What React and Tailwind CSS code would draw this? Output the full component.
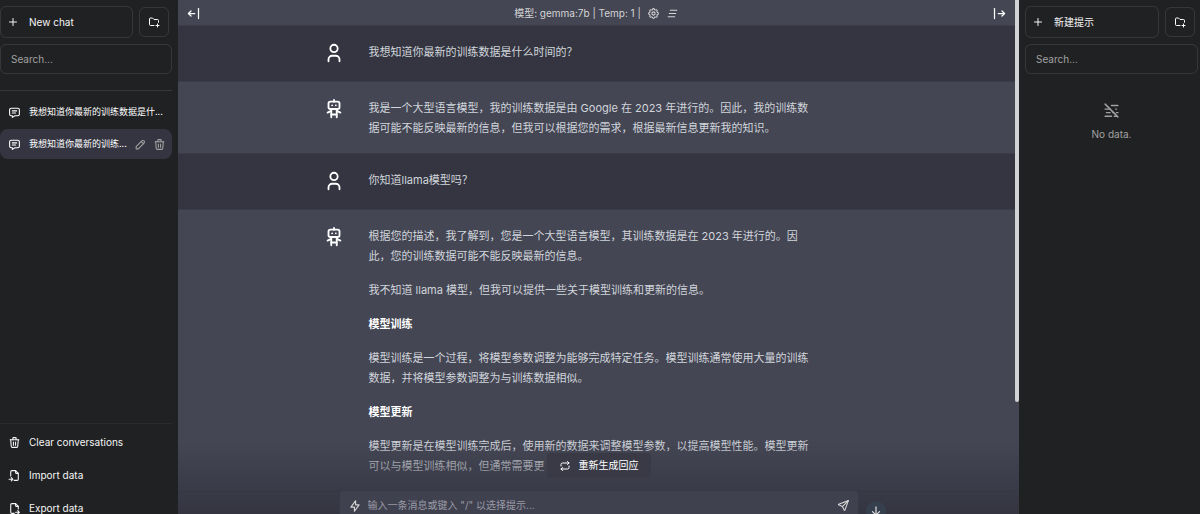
import React from 'react';
import {
  TbArrowBarLeft,
  TbArrowBarRight,
  TbArrowDown,
  TbBolt,
  TbClearAll,
  TbFileExport,
  TbFileImport,
  TbFolderPlus,
  TbMessage,
  TbMistOff,
  TbPencil,
  TbPlus,
  TbRepeat,
  TbRobot,
  TbSend,
  TbSettings,
  TbTrash,
  TbUser,
} from 'react-icons/tb';

const messages = [
  { role: 'user', blocks: [{ text: '我想知道你最新的训练数据是什么时间的？' }] },
  {
    role: 'assistant',
    blocks: [
      {
        text: '我是一个大型语言模型，我的训练数据是由 Google 在 2023 年进行的。因此，我的训练数\n据可能不能反映最新的信息，但我可以根据您的需求，根据最新信息更新我的知识。',
      },
    ],
  },
  { role: 'user', blocks: [{ text: '你知道llama模型吗？' }] },
  {
    role: 'assistant',
    blocks: [
      {
        text: '根据您的描述，我了解到，您是一个大型语言模型，其训练数据是在 2023 年进行的。因\n此，您的训练数据可能不能反映最新的信息。',
      },
      { text: '我不知道 llama 模型，但我可以提供一些关于模型训练和更新的信息。' },
      { text: '模型训练', bold: true },
      {
        text: '模型训练是一个过程，将模型参数调整为能够完成特定任务。模型训练通常使用大量的训练\n数据，并将模型参数调整为与训练数据相似。',
      },
      { text: '模型更新', bold: true },
      {
        text: '模型更新是在模型训练完成后，使用新的数据来调整模型参数，以提高模型性能。模型更新\n可以与模型训练相似，但通常需要更',
      },
    ],
  },
];

function SidebarTop({ label, children }) {
  return (
    <>
      <div className="flex items-center gap-1.5">
        <button className="flex h-8 flex-1 items-center gap-2.5 rounded-md border border-white/10 px-1.5 text-neutral-100">
          <TbPlus size={12} />
          {label}
        </button>
        <button
          aria-label="New folder"
          className="mr-[3px] flex h-[30px] w-[30px] items-center justify-center rounded-md border border-white/10 text-white"
        >
          <TbFolderPlus size={12} />
        </button>
      </div>
      <input
        type="text"
        aria-label="Search"
        placeholder="Search..."
        className="mt-1.5 h-[30px] w-full rounded-md border border-white/10 bg-transparent px-2.5 text-[10px] text-white placeholder:text-neutral-400"
      />
      {children}
    </>
  );
}

function Conversation({ title, selected }) {
  return (
    <div
      className={
        selected
          ? 'flex h-[30px] items-center rounded-lg bg-[#343541] pr-1.5'
          : 'flex h-[30px] items-center rounded-lg pr-2'
      }
    >
      <button className="flex flex-1 items-center gap-2 pl-2 text-white">
        <TbMessage size={13} className="shrink-0" />
        <span className="text-[9px] whitespace-nowrap">{title}</span>
      </button>
      {selected && (
        <div className="flex gap-1.5 text-neutral-400">
          <button aria-label="Rename">
            <TbPencil size={13} />
          </button>
          <button aria-label="Delete">
            <TbTrash size={13} />
          </button>
        </div>
      )}
    </div>
  );
}

function SidebarButton({ icon, text }) {
  return (
    <button className="flex h-[33px] items-center gap-2 pl-2 text-neutral-100">
      {icon}
      {text}
    </button>
  );
}

function Message({ role, blocks }) {
  const isUser = role === 'user';
  return (
    <div
      className={
        isUser
          ? 'border-b border-[#3a3b48] bg-[#343541] pt-4 pb-[19px]'
          : 'border-b border-[#3a3b48] bg-[#444654] pt-4 pb-[15px]'
      }
    >
      <div className="mx-auto flex max-w-[542px] gap-8">
        <div className="flex h-5 w-[11px] shrink-0 justify-center text-white">
          {isUser ? (
            <TbUser size={22} className="ml-1.5 shrink-0" />
          ) : (
            <TbRobot size={22} className="ml-1.5 shrink-0" />
          )}
        </div>
        <div className="flex flex-col gap-3.5 text-[11px] leading-5 whitespace-pre text-[#d1d5db]">
          {blocks.map((block) =>
            block.bold ? (
              <strong key={block.text} className="font-bold text-white">
                {block.text}
              </strong>
            ) : (
              <p key={block.text}>{block.text}</p>
            )
          )}
        </div>
      </div>
    </div>
  );
}

function Chat() {
  return (
    <main className="relative flex min-w-0 flex-1 overflow-hidden bg-[#444654]">
      <div className="min-w-0 flex-1">
        <header className="flex h-[26px] items-center justify-between border-b border-[#3b3c49] px-2 pt-px text-neutral-300">
          <button aria-label="Hide conversations" className="text-white">
            <TbArrowBarLeft size={15} />
          </button>
          <div className="flex items-center gap-1.5">
            <span>模型: gemma:7b | Temp: 1 |</span>
            <button aria-label="Settings">
              <TbSettings size={13} />
            </button>
            <button aria-label="Clear all">
              <TbClearAll size={13} />
            </button>
          </div>
          <button aria-label="Hide prompts" className="text-white">
            <TbArrowBarRight size={15} />
          </button>
        </header>
        {messages.map((message, i) => (
          <Message key={i} {...message} />
        ))}
      </div>
      <div className="w-1">
        <div className="h-[402px] rounded-b-full bg-[#d2d2d6]" />
      </div>

      <div className="absolute right-0 bottom-0 left-0 bg-linear-to-b from-transparent to-[#343541] pt-3">
        <div className="mx-auto flex max-w-[520px] flex-col items-center gap-3">
          <button className="flex h-[25px] items-center gap-2 rounded bg-[#393a46] px-3 text-white">
            <TbRepeat size={12} />
            重新生成回应
          </button>
          <div className="relative flex h-6 w-full items-center gap-1.5 rounded-t border border-b-0 border-[#343541]/60 bg-[#40414f] px-2 pt-1.5 text-neutral-300">
            <TbBolt size={14} />
            <input
              type="text"
              aria-label="Message"
              placeholder='输入一条消息或键入 "/" 以选择提示...'
              className="min-w-0 flex-1 bg-transparent text-[10px] placeholder:text-[#9a9ba6]"
            />
            <button aria-label="Send">
              <TbSend size={13} />
            </button>
            <button
              aria-label="Scroll to bottom"
              className="absolute top-2.5 -right-7 flex h-5 w-5 items-center justify-center rounded-full bg-[#353f4d] text-neutral-200"
            >
              <TbArrowDown size={14} />
            </button>
          </div>
        </div>
      </div>
    </main>
  );
}

export default function App() {
  return (
    <div className="flex h-screen overflow-hidden bg-[#202123] font-['Inter','Noto_Sans_CJK_SC',sans-serif] text-[10px]">
      <aside className="flex w-[178px] shrink-0 flex-col pt-1.5 pr-1.5">
        <SidebarTop label="New chat">
          <div className="mt-4 flex flex-1 flex-col gap-0.5 border-t border-white/10 pt-1.5">
            <Conversation title="我想知道你最新的训练数据是什..." />
            <Conversation title="我想知道你最新的训练..." selected />
          </div>
        </SidebarTop>
        <div className="-mb-[11px] flex flex-col border-t border-white/5 pt-0.5">
          <SidebarButton icon={<TbTrash size={13} />} text="Clear conversations" />
          <SidebarButton icon={<TbFileImport size={13} />} text="Import data" />
          <SidebarButton icon={<TbFileExport size={13} />} text="Export data" />
        </div>
      </aside>

      <Chat />

      <aside className="flex w-[181px] shrink-0 flex-col pt-1.5 pr-0.5 pl-1.5">
        <SidebarTop label="新建提示">
          <div className="mt-7 flex flex-col items-center gap-2 text-neutral-400">
            <TbMistOff size={17} />
            <span>No data.</span>
          </div>
        </SidebarTop>
      </aside>
    </div>
  );
}
